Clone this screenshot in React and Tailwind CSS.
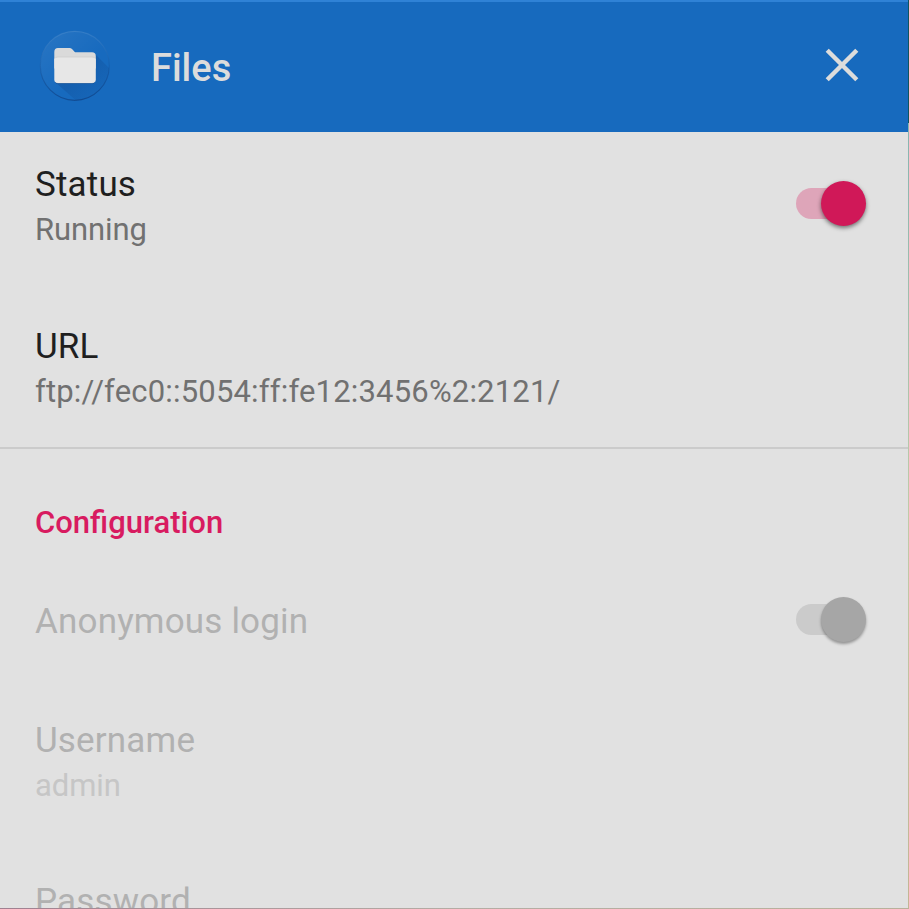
function FolderIcon() {
  return (
    <svg className="-mt-[2px] ml-[38px] h-[76px] w-[76px] shrink-0" viewBox="0 0 76 76" aria-hidden="true">
      <defs>
        <linearGradient id="disc" x1="0" y1="0" x2="1" y2="1">
          <stop offset="0" stopColor="#fff" stopOpacity="0.08" />
          <stop offset="0.6" stopColor="#fff" stopOpacity="0" />
        </linearGradient>
        <linearGradient id="cast" x1="0.2" y1="0.2" x2="0.85" y2="0.85">
          <stop offset="0" stopColor="#0b2f6b" stopOpacity="0.26" />
          <stop offset="1" stopColor="#0b2f6b" stopOpacity="0.04" />
        </linearGradient>
        <linearGradient id="rim" x1="0" y1="0" x2="0" y2="1">
          <stop offset="0" stopColor="#fff" stopOpacity="0.1" />
          <stop offset="0.45" stopColor="#0b2f6b" stopOpacity="0.12" />
          <stop offset="1" stopColor="#0b2f6b" stopOpacity="0.5" />
        </linearGradient>
        <clipPath id="clip">
          <circle cx="36.8" cy="37.8" r="34.8" />
        </clipPath>
      </defs>
      <circle cx="36.8" cy="37.8" r="34.8" fill="url(#disc)" />
      <path clipPath="url(#clip)" d="M57 26 L76 45 V76 H42 L17 54 Z" fill="url(#cast)" />
      <circle cx="36.8" cy="37.8" r="34.5" fill="none" stroke="url(#rim)" strokeWidth="1.2" />
      <g transform="translate(0 0.5)">
        <path d="M20 19.5H31.5Q33 19.5 34 20.5L37 23.8H54Q57.8 23.8 57.8 27.5V40H16.3V23.5Q16.3 19.5 20 19.5Z" fill="#dadada" />
        <path d="M16.3 31Q16.8 28.7 20 28.7H54Q57.3 28.7 57.8 31V51Q57.8 54.7 54 54.7H20Q16.3 54.7 16.3 51Z" fill="#e7e7e7" />
        <path d="M16.6 30.2Q17.4 28.4 20 28.4H54Q56.7 28.4 57.5 30.2" fill="none" stroke="#cdcdcd" strokeWidth="0.7" />
        <path d="M17 53.5Q18 55 20 55H54Q56 55 57 53.5" fill="none" stroke="#0b3f80" strokeOpacity="0.5" strokeWidth="0.8" />
      </g>
    </svg>
  );
}

function Switch({ disabled }) {
  return (
    <div
      role="switch"
      aria-checked="true"
      aria-disabled={disabled}
      className={`flex h-[31px] w-[70px] shrink-0 items-center justify-end rounded-full ${
        disabled
          ? "bg-linear-to-r from-[#cbcbcb] from-70% to-transparent to-70%"
          : "bg-linear-to-r from-[#dea5b9] from-70% to-transparent to-70%"
      }`}
    >
      <div
        className={`size-[45px] shrink-0 rounded-full ${
          disabled
            ? "bg-[#a6a6a6] shadow-[0_2px_3px_rgba(0,0,0,0.35)]"
            : "bg-[#d01858] shadow-[0_2px_4px_rgba(0,0,0,0.5)]"
        }`}
      />
    </div>
  );
}

function Preference({ title, summary, summaryTracking = "tracking-[-0.1px]", disabled, className }) {
  return (
    <div className={className}>
      <div className={`text-[35px] leading-[48px] tracking-[0.17px] ${disabled ? "text-[#b1b1b1]" : "text-[#1f1f1f]"}`}>
        {title}
      </div>
      {summary && (
        <div
          className={`text-[31px] leading-[41px] ${summaryTracking} ${disabled ? "text-[#c6c6c6]" : "text-[#717171]"}`}
        >
          {summary}
        </div>
      )}
    </div>
  );
}

export default function App() {
  return (
    <div className="relative h-[909px] w-[909px] overflow-hidden bg-[#e1e1e1] font-[Roboto,sans-serif]">
      <header className="flex h-[132px] items-center border-t-2 border-[#2f82d6] bg-[#176abe]">
        <FolderIcon />
        <h1 className="mt-[2px] ml-[37px] grow text-[38px] leading-[48px] font-medium text-[#dcdcdc]">Files</h1>
        <svg className="-mt-[4px] mr-[49px] size-[36px]" viewBox="0 0 36 36" aria-label="Close">
          <path d="M3.2 3.2L32.8 32.8M32.8 3.2L3.2 32.8" stroke="#dcdcdc" strokeWidth="4.4" />
        </svg>
      </header>

      <main className="whitespace-nowrap">
        <section className="h-[317px] border-b-2 border-[#cbcbcb] pl-[35px]">
          <div className="flex h-[162px] items-start justify-between pt-[29px] pr-[43px]">
            <Preference title="Status" summary="Running" />
            <div className="pt-[27px]">
              <Switch />
            </div>
          </div>
          <Preference
            title="URL"
            summary="ftp://fec0::5054:ff:fe12:3456%2:2121/"
            summaryTracking="tracking-[0.18px]"
            className="pt-[29px]"
          />
        </section>

        <section className="pt-[53px] pl-[35px]">
          <h2 className="text-[31px] leading-[42px] font-medium text-[#d81b60]">Configuration</h2>
          <div className="flex h-[117px] items-start justify-between pt-[54px] pr-[43px]">
            <Preference title="Anonymous login" disabled />
            <div className="pt-[6px]">
              <Switch disabled />
            </div>
          </div>
          <Preference title="Username" summary="admin" disabled className="h-[162px] pt-[56px]" />
          <Preference title="Password" disabled className="pt-[55px]" />
        </section>
      </main>

      <div className="absolute top-0 right-0 h-[123px] w-px bg-[#0f5560]" />
      <div className="absolute top-[123px] right-0 bottom-0 w-px bg-linear-to-b from-[#86b4b0] via-[#c0cba8] to-[#c4b594]" />
      <div className="absolute right-0 bottom-0 left-0 h-px bg-linear-to-r from-[#a08090] via-[#b4aca4] to-[#b9b19b]" />
    </div>
  );
}
